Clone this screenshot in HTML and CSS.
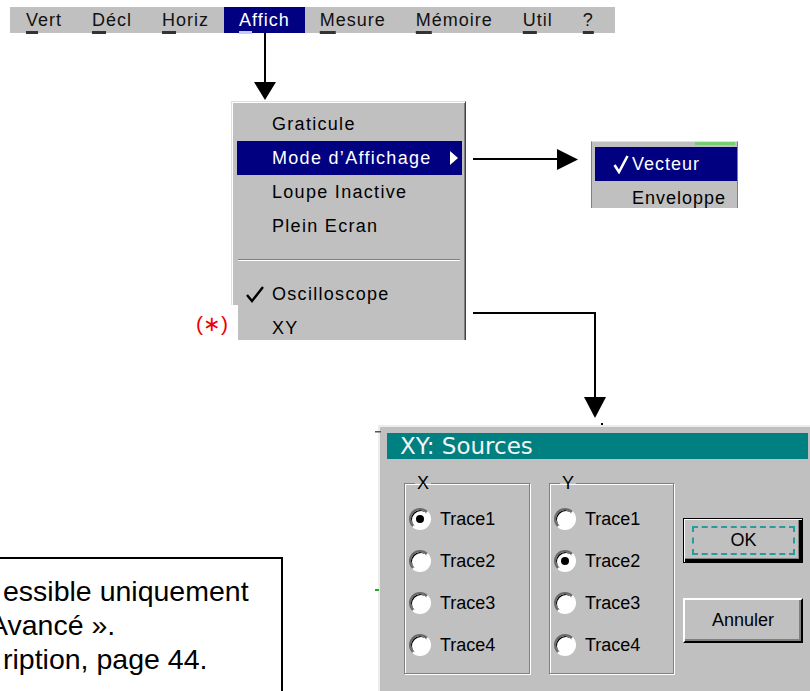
FILE: index.html
```html
<!DOCTYPE html>
<html lang="fr">
<head>
	<meta charset="UTF-8">
	<title>Affich - Mode XY</title>
	<link rel="stylesheet" href="styles.css">
</head>
<body>
	<div class="page">
		<nav class="menubar">
			<span class="mb-item"><u>V</u>ert</span>
			<span class="mb-item"><u>D</u>écl</span>
			<span class="mb-item"><u>H</u>oriz</span>
			<span class="mb-item active"><u>A</u>ffich</span>
			<span class="mb-item"><u>M</u>esure</span>
			<span class="mb-item"><u>M</u>émoire</span>
			<span class="mb-item"><u>U</u>til</span>
			<span class="mb-item"><u>?</u></span>
		</nav>

		<ul class="menu">
			<li><span class="mark"></span>Graticule</li>
			<li class="sel"><span class="mark"></span>Mode d’Affichage<span class="sub-arrow"></span></li>
			<li><span class="mark"></span>Loupe Inactive</li>
			<li><span class="mark"></span>Plein Ecran</li>
			<li class="sep"></li>
			<li><span class="mark"><svg width="20" height="18" viewBox="0 0 20 18"><path d="M2 10 L7 16 L18 2" fill="none" stroke="#000" stroke-width="2.4"/></svg></span>Oscilloscope</li>
			<li><span class="mark"></span>XY</li>
		</ul>

		<div class="star">(∗)</div>

		<ul class="submenu">
			<li class="sel"><span class="mark"><svg width="16" height="20" viewBox="0 0 16 20"><path d="M1.5 11 L6 18 L14.5 2" fill="none" stroke="#fff" stroke-width="2.6"/></svg></span>Vecteur</li>
			<li><span class="mark"></span>Enveloppe</li>
		</ul>

		<div class="dialog">
			<div class="dlg-title">XY: Sources</div>
			<div class="dlg-body">
				<fieldset class="group">
					<legend>X</legend>
					<div class="radio-row"><span class="radio on"></span>Trace1</div>
					<div class="radio-row"><span class="radio"></span>Trace2</div>
					<div class="radio-row"><span class="radio"></span>Trace3</div>
					<div class="radio-row"><span class="radio"></span>Trace4</div>
				</fieldset>
				<fieldset class="group">
					<legend>Y</legend>
					<div class="radio-row"><span class="radio"></span>Trace1</div>
					<div class="radio-row"><span class="radio on"></span>Trace2</div>
					<div class="radio-row"><span class="radio"></span>Trace3</div>
					<div class="radio-row"><span class="radio"></span>Trace4</div>
				</fieldset>
				<div class="buttons">
					<button class="btn default"><span class="focus">OK</span></button>
					<button class="btn">Annuler</button>
				</div>
			</div>
		</div>

		<div class="note">
			<p>essible uniquement</p>
			<p class="cut">Avancé ».</p>
			<p>ription, page 44.</p>
		</div>

		<!-- fleches entre les captures -->
		<svg class="arrows" width="810" height="691" viewBox="0 0 810 691">
			<g stroke="#000" stroke-width="2" fill="none">
				<path d="M265 33V83"/>
				<path d="M473 159H558"/>
				<path d="M473 313H595V398"/>
			</g>
			<g fill="#000">
				<path d="M254 82H276L265 100Z"/>
				<path d="M557 149V170L578 159.5Z"/>
				<path d="M584 397H606L595 418Z"/>
				<rect x="601" y="423" width="2" height="2"/>
			</g>
			<rect x="375" y="431" width="6" height="1.5" fill="#555"/>
			<rect x="375" y="589" width="4" height="2" fill="#2a2"/>
		</svg>
	</div>
</body>
</html>
```

FILE: styles.css
```css
html, body {
	margin: 0;
	overflow: hidden;
	background: #fff;
}
ul {
	margin: 0;
	padding: 0;
	list-style: none;
}
.page {
	position: relative;
	width: 810px;
	height: 691px;
	overflow: hidden;
	font-family: "Liberation Sans", Arial, sans-serif;
	color: #000;
}

/* barre de menus */
.menubar {
	position: absolute;
	left: 10px;
	top: 7px;
	width: 605px;
	height: 26px;
	padding-left: 1px;
	box-sizing: border-box;
	display: flex;
	background: #c0c0c0;
	font-size: 18px;
	letter-spacing: 1px;
	line-height: 26px;
}
.mb-item {
	padding: 0 15px;
	color: #111;
}
.mb-item u {
	text-decoration-thickness: 3px;
	text-underline-offset: 5px;
	text-decoration-color: #333;
}
.mb-item.active {
	background: #000080;
	color: #fff;
}
.mb-item.active u {
	text-decoration-color: #c8c8ff;
}

/* menu deroulant */
.menu {
	position: absolute;
	left: 231px;
	top: 101px;
	width: 235px;
	height: 239px;
	box-sizing: border-box;
	padding: 5px 3px 0 5px;
	background: #c0c0c0;
	border: 1px solid #dfdfdf;
	border-right-color: #404040;
	border-bottom: 0;
	box-shadow: inset 1px 1px 0 #fff, inset -1px 0 0 #808080;
	overflow: hidden;
	font-size: 18px;
	letter-spacing: 1.3px;
}
.menu li {
	display: flex;
	align-items: center;
	height: 34px;
	padding-left: 8px;
}
.mark {
	display: flex;
	flex: none;
	width: 27px;
}
.menu li.sel,
.submenu li.sel {
	background: #000080;
	color: #fff;
}
.sub-arrow {
	margin-left: auto;
	margin-right: 4px;
	border-left: 8px solid #fff;
	border-top: 7px solid transparent;
	border-bottom: 7px solid transparent;
}
.menu li.sep {
	padding: 0 2px 0 1px;
}
.menu li.sep::after {
	content: "";
	flex: 1;
	border-top: 1px solid #808080;
	border-bottom: 1px solid #fff;
}
.star {
	position: absolute;
	left: 180px;
	top: 305px;
	width: 58px;
	height: 40px;
	box-sizing: border-box;
	padding-left: 16px;
	background: #fff;
	color: #e00;
	font-size: 21px;
	line-height: 38px;
}

/* sous-menu */
.submenu {
	position: absolute;
	left: 591px;
	top: 141px;
	width: 147px;
	height: 67px;
	box-sizing: border-box;
	padding: 5px 0 0 3px;
	background: #c0c0c0;
	border-top: 1px solid #e0e0e0;
	border-left: 1px solid #808080;
	border-right: 1px solid #808080;
	overflow: hidden;
	font-size: 18px;
	letter-spacing: 1px;
}
.submenu::before {
	content: "";
	position: absolute;
	right: 2px;
	top: 0;
	width: 40px;
	height: 3px;
	background: #7c7;
}
.submenu li {
	display: flex;
	align-items: center;
	height: 34px;
	padding-left: 18px;
}
.submenu .mark {
	width: 19px;
}

/* boite de dialogue */
.dialog {
	position: absolute;
	left: 378px;
	top: 425px;
	width: 434px;
	height: 280px;
	box-sizing: border-box;
	padding: 6px 4px 0 7px;
	background: #c0c0c0;
	border-top: 2px solid #ececec;
	border-left: 2px solid #ececec;
}
.dlg-title {
	height: 26px;
	padding-left: 13px;
	background: #008080;
	color: #f4f4f4;
	font-family: "DejaVu Sans", sans-serif;
	font-size: 23px;
	line-height: 26px;
}
.dlg-body {
	display: flex;
	align-items: flex-start;
	margin-top: 14px;
	padding-left: 17px;
	font-size: 18px;
}
.group {
	width: 126px;
	margin: 0;
	box-sizing: border-box;
	padding: 5px 0 7px 4px;
	border: 1px solid #808080;
	box-shadow: inset 1px 1px 0 #fff, 1px 1px 0 #fff;
}
.group + .group {
	width: 125px;
	margin-left: 19px;
}
.group legend {
	margin-left: 6px;
	padding: 0 2px;
	font-size: 18px;
	line-height: 20px;
}
.radio-row {
	display: flex;
	align-items: center;
	gap: 9px;
	height: 42px;
}
.radio {
	display: flex;
	align-items: center;
	justify-content: center;
	width: 22px;
	height: 22px;
	box-sizing: border-box;
	border-radius: 50%;
	background: #fff;
	border: 2px solid;
	border-color: #6a6a6a #fff #fff #6a6a6a;
	box-shadow: inset 1px 1px 0 #000;
}
.radio.on::after {
	content: "";
	width: 8px;
	height: 8px;
	border-radius: 50%;
	background: #000;
}
.buttons {
	display: flex;
	flex-direction: column;
	gap: 35px;
	margin: 45px 0 0 9px;
}
.btn {
	width: 120px;
	height: 45px;
	box-sizing: border-box;
	padding: 0;
	background: #c0c0c0;
	color: #000;
	font: inherit;
	font-size: 18px;
	border: 2px solid;
	border-color: #fff #000 #000 #fff;
	box-shadow: inset -2px -2px 0 #808080;
}
.btn.default {
	border: 1px solid #000;
	padding: 7px 7px 7px 8px;
	box-shadow: inset 1px 1px 0 #fff, inset -3px -3px 0 #000, inset -4px -4px 0 #808080;
}
.focus {
	display: flex;
	align-items: center;
	justify-content: center;
	height: 100%;
	box-sizing: border-box;
	border: 2px dashed #2a9a9a;
}

/* encadre de note */
.note {
	position: absolute;
	left: -12px;
	top: 557px;
	width: 295px;
	height: 200px;
	box-sizing: border-box;
	padding: 15px 0 0 13px;
	border: 2px solid #000;
	font-size: 28.5px;
	line-height: 34px;
}
.note p {
	margin: 0;
	white-space: nowrap;
}
.note .cut {
	margin-left: -14px;
}

.arrows {
	position: absolute;
	left: 0;
	top: 0;
	pointer-events: none;
}
```
